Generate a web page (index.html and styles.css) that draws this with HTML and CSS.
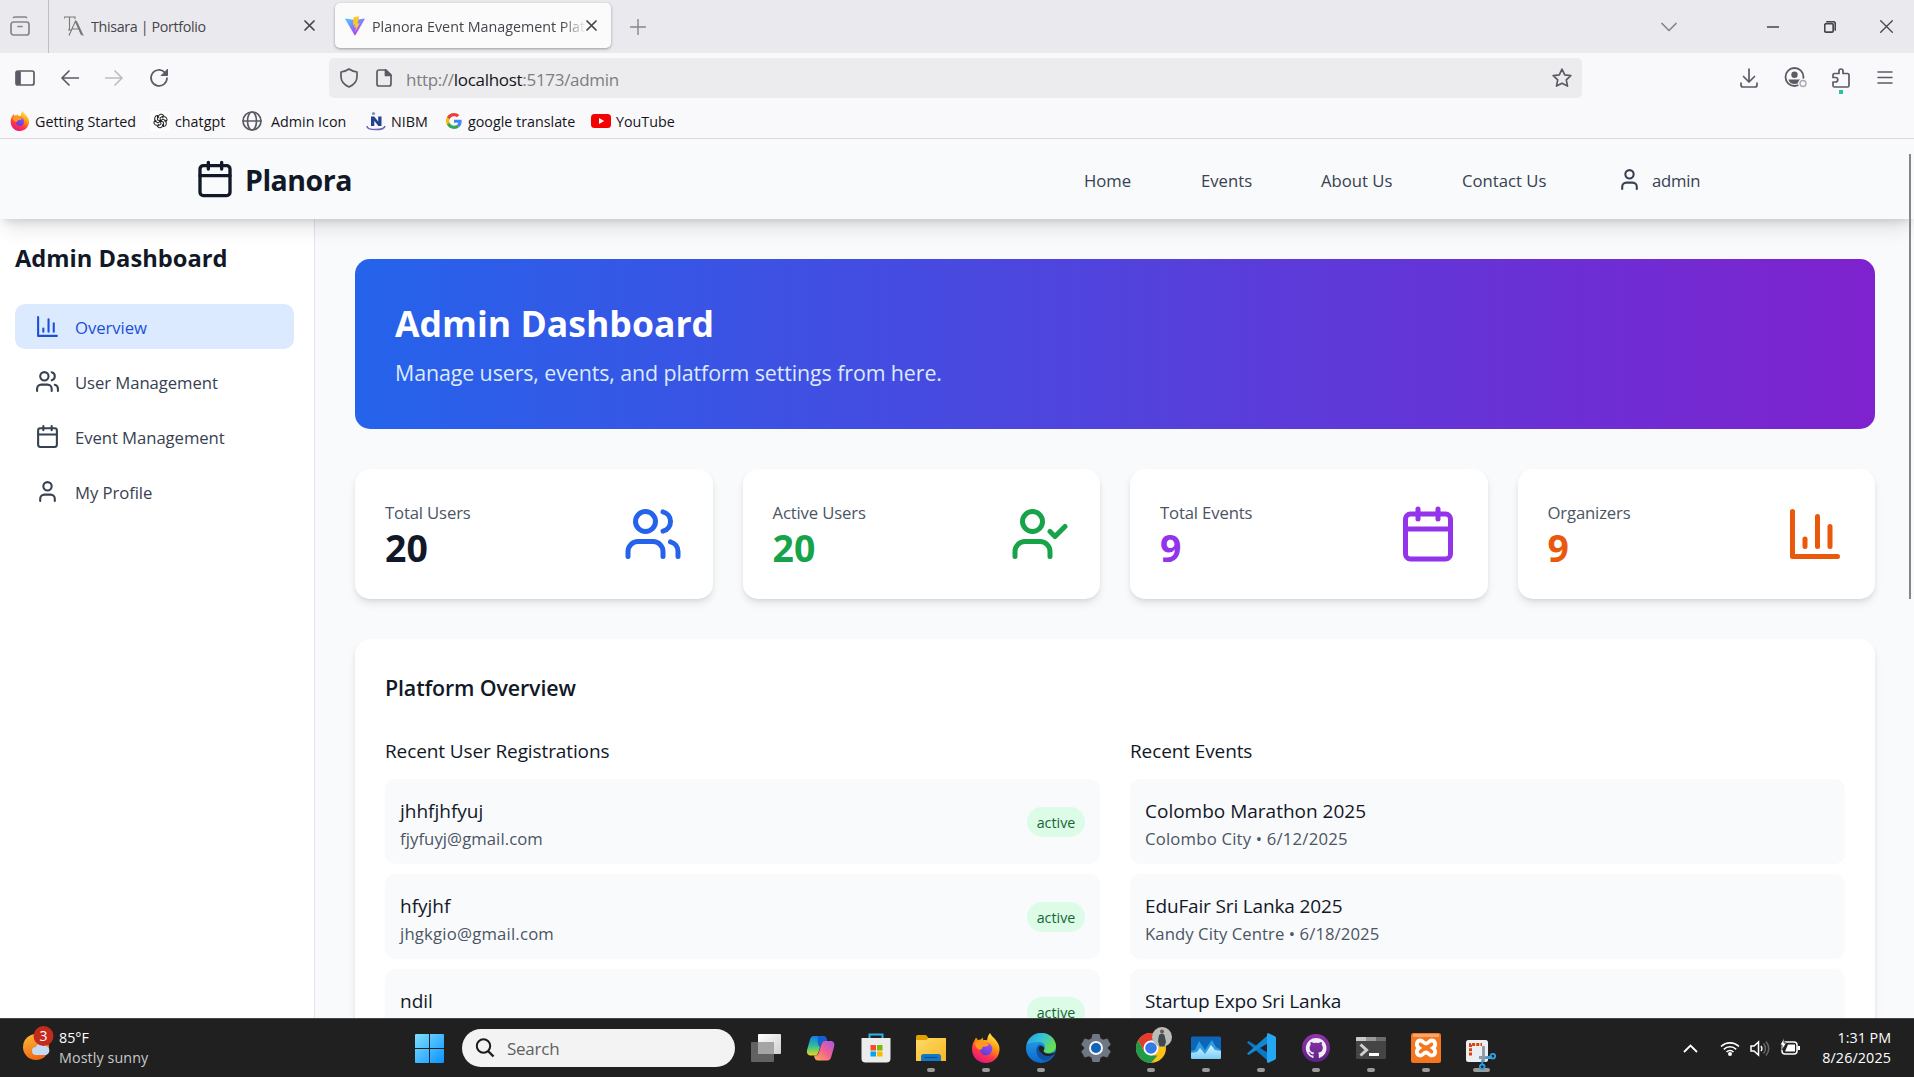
FILE: index.html
```html
<!DOCTYPE html>
<html lang="en">
<head>
<meta charset="utf-8">
<title>Planora Event Management Platform</title>
<link rel="stylesheet" href="styles.css">
</head>
<body>
<svg class="defs" width="0" height="0" aria-hidden="true">
  <defs>
    <symbol id="calendar" viewBox="0 0 24 24"><path d="M8 2v4M16 2v4M3 10h18"/><rect x="3" y="4" width="18" height="18" rx="2"/></symbol>
    <symbol id="user" viewBox="0 0 24 24"><path d="M19 21v-2a4 4 0 0 0-4-4H9a4 4 0 0 0-4 4v2"/><circle cx="12" cy="7" r="4"/></symbol>
    <symbol id="users" viewBox="0 0 24 24"><path d="M16 21v-2a4 4 0 0 0-4-4H6a4 4 0 0 0-4 4v2M22 21v-2a4 4 0 0 0-3-3.87M16 3.13a4 4 0 0 1 0 7.75"/><circle cx="9" cy="7" r="4"/></symbol>
    <symbol id="user-check" viewBox="0 0 24 24"><path d="M16 21v-2a4 4 0 0 0-4-4H6a4 4 0 0 0-4 4v2M16 11l2 2 4-4"/><circle cx="9" cy="7" r="4"/></symbol>
    <symbol id="chart" viewBox="0 0 24 24"><path d="M3 3v18h18M18 17V9M13 17V5M8 17v-3"/></symbol>
    <linearGradient id="ffOuter" x1=".8" y1="0" x2=".3" y2="1"><stop offset="0" stop-color="#fff44f"/><stop offset=".4" stop-color="#ff980e"/><stop offset=".7" stop-color="#ff3647"/><stop offset="1" stop-color="#e31587"/></linearGradient>
    <linearGradient id="ffInner" x1=".8" y1="0" x2=".3" y2="1"><stop offset="0" stop-color="#a84cf0"/><stop offset="1" stop-color="#5a3fd6"/></linearGradient>
    <symbol id="firefox" viewBox="0 0 30 30">
      <path fill="url(#ffOuter)" d="M19 0c1 3 5 5 7.500 9.500 2 3 2.300 6 1.800 9C27.200 25.300 21.600 30 15 30 7.500 30 1 24.500 1 16c0-3.600 1-6.500 2.500-8.500L5 4.500l2 2.700c1-.6 2-.8 3-.6l1.500-2 .8 2.600c1.600-.4 3-.3 3.700.2C16.500 5 17 2 19 0z"/>
      <circle cx="15" cy="16" r="6.300" fill="url(#ffInner)"/>
      <path fill="#ff9a1f" d="M4 11c3-4 7-4 10-2l4 2.500c-1 1.800-3 2-4.500 2-2 0-3 1.500-2.800 3C7 17 5 14.500 4 11z"/>
    </symbol>
    <linearGradient id="vite" x1="0" y1="0" x2=".6" y2="1"><stop offset="0" stop-color="#41d1ff"/><stop offset="1" stop-color="#bd34fe"/></linearGradient>
    <linearGradient id="win" x1="0" y1="0" x2="1" y2="1"><stop offset="0" stop-color="#7fdfff"/><stop offset="1" stop-color="#0a93ff"/></linearGradient>
    <linearGradient id="sun" x1="0" y1="0" x2=".3" y2="1"><stop offset="0" stop-color="#fbbd3a"/><stop offset="1" stop-color="#f26a12"/></linearGradient>
    <linearGradient id="cpA" x1="0" y1="0" x2="0" y2="1"><stop offset="0" stop-color="#1879e8"/><stop offset=".5" stop-color="#2bbf9a"/><stop offset="1" stop-color="#e8d822"/></linearGradient>
    <linearGradient id="cpB" x1="1" y1="0" x2="0" y2="1"><stop offset="0" stop-color="#a556f0"/><stop offset=".5" stop-color="#f2608f"/><stop offset="1" stop-color="#ffb04f"/></linearGradient>
    <linearGradient id="fold" x1="0" y1="0" x2="1" y2="1"><stop offset="0" stop-color="#ffdc68"/><stop offset="1" stop-color="#f9b622"/></linearGradient>
    <linearGradient id="edgeT" x1="0" y1="0" x2="1" y2=".5"><stop offset="0" stop-color="#1f9fe0"/><stop offset=".5" stop-color="#35c1d8"/><stop offset="1" stop-color="#68e04c"/></linearGradient>
    <linearGradient id="edgeB" x1="0" y1="0" x2="0" y2="1"><stop offset="0" stop-color="#2aa7ec"/><stop offset="1" stop-color="#0b68cd"/></linearGradient>
    <linearGradient id="gh" x1="0" y1="0" x2="0" y2="1"><stop offset="0" stop-color="#9335ae"/><stop offset="1" stop-color="#5c2384"/></linearGradient>
    <linearGradient id="perf" x1="0" y1="0" x2="0" y2="1"><stop offset="0" stop-color="#d7f3ff"/><stop offset="1" stop-color="#79cdf8"/></linearGradient>
    <linearGradient id="tv" x1="0" y1="0" x2="1" y2="1"><stop offset="0" stop-color="#fff"/><stop offset="1" stop-color="#cfcfcf"/></linearGradient>
  </defs>
</svg>

<div class="screen">
  <div class="tabbar">
    <div class="recent"><svg width="20" height="20" viewBox="0 0 20 20" class="ln grey"><rect x="1" y="6" width="18" height="13" rx="2.500"/><path d="M3.500 1.500Q4 1 5 1h10q1 0 1.500.5M8 10.500h4"/></svg></div>
    <div class="tab">
      <svg width="20" height="20" viewBox="0 0 20 20" fill="none" stroke="#777" stroke-width="1.100"><path d="M0 3V1h11v2M5.500 1v13M4 14h3M5 19.500L11.500 5l6 13.500 2 .8M8.500 13h6"/><path d="M12 5.500l6 13" stroke-width="2"/></svg>
      <span class="tab-title t-port">Thisara | Portfolio</span>
      <svg class="ln dark" width="11" height="11" viewBox="0 0 11 11"><path d="M1 1l9 9M10 1l-9 9"/></svg>
    </div>
    <div class="tab active">
      <svg width="20" height="20" viewBox="0 0 20 20"><path fill="url(#vite)" d="M.7 2.500L10 4l9.300-1.500q.6.300.3 1L10.500 19q-.5.800-1 0L.4 3.500q-.2-.6.300-1z"/><path fill="#ffc62b" d="M14.300.2L8.500 1.300 8 8.800l2-.4-.7 3.200 1.800-.4-.8 4.600 4.500-8.600-2.200.4z"/></svg>
      <span class="tab-title t-plan">Planora Event Management Plat</span>
      <svg class="ln dark" width="11" height="11" viewBox="0 0 11 11"><path d="M1 1l9 9M10 1l-9 9"/></svg>
    </div>
    <svg class="plus ln grey" width="16" height="16" viewBox="0 0 16 16"><path d="M8 .5v15M.5 8h15" stroke-width="1.400"/></svg>
    <div class="wincontrols">
      <svg class="ln grey" width="16" height="10" viewBox="0 0 16 10"><path d="M1 1.500l7 7 7-7"/></svg>
      <svg class="ln dark" width="12" height="12" viewBox="0 0 12 12"><path d="M0 6h12" stroke-width="1.300"/></svg>
      <svg class="ln dark" width="12" height="12" viewBox="0 0 12 12"><rect x=".7" y="2.700" width="8.500" height="8.500" rx="1.500"/><path d="M3 .7h6a2.300 2.300 0 0 1 2.300 2.300v6"/></svg>
      <svg class="ln dark" width="13" height="13" viewBox="0 0 13 13"><path d="M.7.7l11.600 11.600M12.300.7L.7 12.300" stroke-width="1.300"/></svg>
    </div>
  </div>

  <div class="toolbar">
    <div class="navbtns">
      <svg class="ln tool" width="20" height="16" viewBox="0 0 20 16"><rect x="1" y="1" width="18" height="14" rx="2"/><path d="M2 2h3v12H2z" fill="#5b5b66"/></svg>
      <svg class="ln tool" width="18" height="16" viewBox="0 0 18 16"><path d="M17.500 8H1M8 1L1 8l7 7"/></svg>
      <svg class="ln faint" width="18" height="16" viewBox="0 0 18 16"><path d="M.5 8H17M10 1l7 7-7 7"/></svg>
      <svg class="ln tool" width="20" height="20" viewBox="0 0 20 20"><path d="M18 10a8 8 0 1 1-2.300-5.700"/><path d="M18.500 1.500v6h-6z" fill="#5b5b66" stroke-width="1"/></svg>
    </div>
    <div class="urlbar">
      <svg class="ln tool" width="18" height="20" viewBox="0 0 18 20"><path d="M9 1c2.500 1.800 5 2.600 8 3v4.500C17 13.500 13.500 17 9 19c-4.500-2-8-5.500-8-10.500V4c3-.4 5.500-1.200 8-3z"/></svg>
      <svg class="ln tool" width="16" height="18" viewBox="0 0 16 18"><path d="M3 1h7l5 5v9a2 2 0 0 1-2 2H3a2 2 0 0 1-2-2V3a2 2 0 0 1 2-2z"/><path d="M9.500 1v5.500H15z" fill="#5b5b66"/></svg>
      <span class="url">http://<b>localhost</b>:5173/admin</span>
      <svg class="ln tool star" width="20" height="20" viewBox="0 0 20 20"><path d="M10 1.200l2.700 5.600 6.100.8-4.500 4.200 1.200 6.300L10 15.200l-5.500 2.900 1.200-6.300L1.200 7.600l6.100-.8z"/></svg>
    </div>
    <div class="tools">
      <svg class="ln tool" width="18" height="20" viewBox="0 0 18 20"><path d="M9 1v13M3.500 8.500L9 14l5.500-5.500M1 15v2a2 2 0 0 0 2 2h12a2 2 0 0 0 2-2v-2"/></svg>
      <svg width="24" height="21" viewBox="0 0 24 21"><circle cx="10.500" cy="10" r="9" fill="none" stroke="#5b5b66" stroke-width="1.800"/><circle cx="10.500" cy="7.800" r="3.200" fill="#5b5b66"/><path d="M4.500 12.500h12c-.5 3-3 4.500-6 4.500s-5.500-1.500-6-4.500z" fill="#5b5b66"/><circle cx="19" cy="16.500" r="5" fill="#f9f9fb"/><circle cx="19" cy="16.500" r="3" fill="none" stroke="#aaaab0" stroke-width="1.300"/></svg>
      <div class="ext"><svg class="ln tool" width="18" height="20" viewBox="0 0 18 20"><path d="M7 5.500V3a2 2 0 0 1 4 0v2.500h4.500A1.500 1.500 0 0 1 17 7v10.500a1.500 1.500 0 0 1-1.500 1.500h-13A1.500 1.500 0 0 1 1 17.500V14h2.500a2 2 0 0 0 0-4.500H1V7a1.500 1.500 0 0 1 1.500-1.500z"/></svg><i class="extdot"></i></div>
      <svg class="ln tool" width="16" height="13" viewBox="0 0 16 13"><path d="M1 1h14M1 6.500h14M1 12h14" stroke-width="1.500"/></svg>
    </div>
  </div>

  <div class="bookmarks">
    <svg width="20" height="20"><use href="#firefox"/></svg><span class="b1">Getting Started</span>
    <svg width="20" height="20" viewBox="0 0 20 20"><rect width="20" height="20" rx="3" fill="#fff"/><g fill="none" stroke="#222" stroke-width="1.150" transform="translate(10.500 10) scale(.88)"><path id="petal" d="M-2.500-3.500v-1.300A3.300 3.300 0 0 1 3.600-6L-.5-3.500 0 1.500"/><use href="#petal" transform="rotate(60)"/><use href="#petal" transform="rotate(120)"/><use href="#petal" transform="rotate(180)"/><use href="#petal" transform="rotate(240)"/><use href="#petal" transform="rotate(300)"/></g></svg><span class="b2">chatgpt</span>
    <svg class="ln tool" width="20" height="20" viewBox="0 0 20 20"><circle cx="10" cy="10" r="9"/><ellipse cx="10" cy="10" rx="4.500" ry="9"/><path d="M1 10h18"/></svg><span class="b3">Admin Icon</span>
    <svg width="20" height="20" viewBox="0 0 20 20"><path d="M5 15V5.500h3.200l4 5V5.500H15.500V15h-3.200l-4-5.200V15z" fill="#24438e"/><circle cx="7.500" cy="2.500" r="1.600" fill="#7d92bd"/><path d="M1 15c0 4.800 17 4.800 18 0" fill="none" stroke="#6d63b8" stroke-width="1.500"/></svg><span class="b4">NIBM</span>
    <svg width="16" height="16" viewBox="0 0 48 48"><path fill="#ea4335" d="M24 9.500c3.500 0 6.700 1.200 9.200 3.600l6.900-6.900C35.900 2.400 30.500 0 24 0 14.600 0 6.500 5.400 2.600 13.200l8 6.200C12.400 13.700 17.700 9.500 24 9.500z"/><path fill="#4285f4" d="M47 24.600c0-1.600-.2-3.100-.4-4.600H24v9h12.900c-.6 3-2.200 5.500-4.700 7.200l7.700 6C44.400 38 47 31.800 47 24.600z"/><path fill="#fbbc05" d="M10.500 28.600A14.500 14.500 0 0 1 10.500 19.400l-8-6.200a24 24 0 0 0 0 21.600z"/><path fill="#34a853" d="M24 48c6.500 0 12-2.100 15.900-5.800l-7.700-6c-2.200 1.400-4.900 2.300-8.200 2.300-6.300 0-11.600-4.200-13.500-9.900l-8 6.200C6.500 42.600 14.600 48 24 48z"/></svg><span class="b5">google translate</span>
    <svg width="20" height="14" viewBox="0 0 20 14"><rect width="20" height="14" rx="3.500" fill="#f60002"/><path d="M8 4l5.200 3L8 10z" fill="#fff"/></svg><span class="b6">YouTube</span>
  </div>

  <div class="page">
    <header class="site-header">
      <div class="brand"><svg class="luc" width="40" height="40"><use href="#calendar"/></svg><span>Planora</span></div>
      <nav class="site-nav">
        <a class="n1">Home</a><a class="n2">Events</a><a class="n3">About Us</a><a class="n4">Contact Us</a>
        <a class="n5"><svg class="luc" width="25" height="25"><use href="#user"/></svg><span>admin</span></a>
      </nav>
    </header>

    <div class="body">
      <aside class="sidebar">
        <h2>Admin Dashboard</h2>
        <a class="item current"><svg class="luc" width="25" height="25"><use href="#chart"/></svg><span>Overview</span></a>
        <a class="item"><svg class="luc" width="25" height="25"><use href="#users"/></svg><span>User Management</span></a>
        <a class="item"><svg class="luc" width="25" height="25"><use href="#calendar"/></svg><span>Event Management</span></a>
        <a class="item"><svg class="luc" width="25" height="25"><use href="#user"/></svg><span>My Profile</span></a>
      </aside>

      <main class="main">
        <section class="hero">
          <h1>Admin Dashboard</h1>
          <p>Manage users, events, and platform settings from here.</p>
        </section>

        <section class="stats">
          <div class="card stat"><div><p>Total Users</p><strong>20</strong></div><svg class="luc blue" width="60" height="60"><use href="#users"/></svg></div>
          <div class="card stat green"><div><p>Active Users</p><strong>20</strong></div><svg class="luc" width="60" height="60"><use href="#user-check"/></svg></div>
          <div class="card stat purple"><div><p>Total Events</p><strong>9</strong></div><svg class="luc" width="60" height="60"><use href="#calendar"/></svg></div>
          <div class="card stat orange"><div><p>Organizers</p><strong>9</strong></div><svg class="luc" width="60" height="60"><use href="#chart"/></svg></div>
        </section>

        <section class="card overview">
          <h3>Platform Overview</h3>
          <div class="cols">
            <div class="col">
              <h4>Recent User Registrations</h4>
              <div class="row"><div><p class="name">jhhfjhfyuj</p><p class="sub">fjyfuyj@gmail.com</p></div><span class="badge">active</span></div>
              <div class="row"><div><p class="name">hfyjhf</p><p class="sub wide-sub">jhgkgio@gmail.com</p></div><span class="badge">active</span></div>
              <div class="row"><div><p class="name">ndil</p><p class="sub">&nbsp;</p></div><span class="badge">active</span></div>
            </div>
            <div class="col">
              <h4>Recent Events</h4>
              <div class="row"><div><p class="name">Colombo Marathon 2025</p><p class="sub wide-sub">Colombo City • 6/12/2025</p></div></div>
              <div class="row"><div><p class="name tight">EduFair Sri Lanka 2025</p><p class="sub">Kandy City Centre • 6/18/2025</p></div></div>
              <div class="row"><div><p class="name tight">Startup Expo Sri Lanka</p><p class="sub">&nbsp;</p></div></div>
            </div>
          </div>
        </section>
      </main>
    </div>
    <i class="scroll-thumb"></i>
  </div>

  <footer class="taskbar">
    <div class="weather">
      <svg width="36" height="36" viewBox="0 0 36 36"><circle cx="14" cy="21" r="13" fill="url(#sun)"/><path d="M14 29a4 4 0 0 1 0-8 5.500 5.500 0 0 1 10-1 4.700 4.700 0 0 1 0 9z" fill="#c5daf7"/><circle cx="21.500" cy="10" r="10" fill="#c42b1c"/><text x="21.500" y="15" text-anchor="middle" font-size="14" fill="#fff">3</text></svg>
      <div class="wtext"><span>85°F</span><span class="w2">Mostly sunny</span></div>
    </div>
    <svg width="29" height="29" viewBox="0 0 29 29"><path fill="url(#win)" d="M1 0h13v14H0V1a1 1 0 0 1 1-1zM15 0h13a1 1 0 0 1 1 1v13H15zM0 15h14v14H1a1 1 0 0 1-1-1zM15 15h14v13a1 1 0 0 1-1 1H15z"/></svg>
    <div class="search"><svg width="20" height="20" viewBox="0 0 20 20" fill="none" stroke="#1c1c1c" stroke-width="2"><circle cx="8.500" cy="8" r="6.700"/><path d="M13 13l5.500 5.500" stroke-width="2.400"/></svg><span>Search</span></div>
    <div class="apps">
      <div class="app"><svg viewBox="0 0 30 30"><rect x="7" y="1" width="23" height="20" rx="1" fill="url(#tv)"/><rect y="9" width="23" height="20" rx="1" fill="#6f6f6f" opacity=".85"/><path d="M7 9h16v12H7z" fill="#a5a5a5"/></svg></div>
      <div class="app"><svg viewBox="0 0 30 30"><path fill="url(#cpA)" d="M7.500 3h9.500c2 0 3 1 3.500 3l.5 2h-2.500c-2 0-2.800 1-3.300 2.500L12.500 19c-.7 2-1.500 3.500-3.500 3.500H5C1.500 22.500.3 20 1.200 16.500L4 6.500C4.700 4.200 5.500 3 7.500 3z"/><path fill="#1260d8" d="M12 3h5c2 0 3 1 3.500 3l.5 2h-2.500c-2 0-2.800 1-3.300 2.500L14 14C12 13 11 8 12 3z"/><path fill="url(#cpB)" d="M21.500 27.500H12c-2 0-3-1-3.500-3L8 22.500h1.500c2 0 2.800-1 3.300-3L15.500 11c.7-2 1.500-3 3.500-3h5.500c3.500 0 4.500 2.500 3.500 6l-2.800 10c-.7 2.300-1.700 3.500-3.700 3.500z"/></svg></div>
      <div class="app"><svg viewBox="0 0 30 30"><path d="M8.500 6V1.500h13V6" fill="none" stroke="#2db4f0" stroke-width="2"/><path d="M.5 5h29v20.500a4 4 0 0 1-4 4h-21a4 4 0 0 1-4-4z" fill="#ececec"/><path d="M9.500 12H15v5.500H9.500z" fill="#f25022"/><path d="M16 12h5.500v5.500H16z" fill="#7fba00"/><path d="M9.500 18.500H15v5H9.500z" fill="#00a4ef"/><path d="M16 18.500h5.500v5H16z" fill="#ffb900"/></svg></div>
      <div class="app run"><svg viewBox="0 0 30 30"><path d="M0 3.500A1.500 1.500 0 0 1 1.500 2H10l3 3.500V10H0z" fill="#e0a000"/><path d="M0 7h10l3-2h17v23H0z" fill="url(#fold)"/><path d="M5 28v-4.500A2.500 2.500 0 0 1 7.500 21h15a2.500 2.500 0 0 1 2.500 2.500V28z" fill="#1279c9"/><path d="M8.500 24.500h13" stroke="#074d8c" stroke-width="1.200"/></svg></div>
      <div class="app run"><svg><use href="#firefox"/></svg></div>
      <div class="app run"><svg viewBox="0 0 30 30"><circle cx="15" cy="15" r="15" fill="url(#edgeB)"/><path fill="url(#edgeT)" d="M1 11C3 4 9 0 15.500 0 24 0 30 6.500 30 13c0 5-4 7-8 7-3.500 0-5-1.200-4-2.700 2-3 1-8-4.500-8.300C8 8.500 3 10 1 11z"/><path fill="#124f9c" d="M13 12c-2 1.500-3 4-2.500 7 .7 4.500 4.500 8.500 9.500 8.800 3-1 6-3.300 7.500-6.300-3 1.500-8 1.500-10.500-1-1-1-1-2 0-3 1.500-2-1-6.500-4-5.500z"/><path fill="#222" d="M13.200 14c2-2.200 5.300-.5 5 2-.4 1.500-1.700 2.200 1 4 3 1.400 7 1.200 10-1.200-.6 2-1.200 2.700-1.700 3.200-4 1.800-8.500 1.300-11-1-2-1.800-4.600-4-3.300-7z"/></svg></div>
      <div class="app"><svg viewBox="0 0 30 30"><path fill="#6f7882" d="M11.500 1h7l1 4.200 2.600 1.500L26.300 5.500l3.500 6-3 3v1l3 3-3.500 6-4.200-1.200-2.600 1.500-1 4.200h-7l-1-4.200-2.600-1.500L3.700 24.500.2 18.500l3-3v-1l-3-3 3.500-6 4.200 1.200 2.600-1.500z"/><circle cx="15" cy="15" r="7" fill="#f1f4f6"/><circle cx="15" cy="15" r="5" fill="#0e63b5"/></svg></div>
      <div class="app run"><svg viewBox="0 0 30 30"><circle cx="15" cy="15" r="15" fill="#fbc116"/><path fill="#e33b2e" d="M2 7.500a15 15 0 0 1 26 0H15v7.500L8.500 18.800z"/><path fill="#229a4a" d="M2 7.500L8.500 18.800 15 22.500h6.500L15 30A15 15 0 0 1 2 7.500z"/><circle cx="15" cy="15" r="7.500" fill="#fff"/><circle cx="15" cy="15" r="5.800" fill="#3479e8"/></svg><svg class="avatar" viewBox="0 0 20 20"><circle cx="10" cy="10" r="10" fill="#b9bfb8"/><path d="M7 8q3-3 5.500 0l1.500 7-1.500 4.500h-5L6 14z" fill="#3e4a50"/><circle cx="10" cy="4.500" r="2" fill="#6d5648"/></svg></div>
      <div class="app run"><svg viewBox="0 0 30 30"><path d="M0 5a1.500 1.500 0 0 1 1.500-1.500h27A1.500 1.500 0 0 1 30 5v20H0z" fill="#0d65b5"/><path d="M0 18l4-1 4-9 6 9 4-6 3-4 4 7 5 3v8H0z" fill="#2d9be3"/><path d="M0 20l6-1 3-4 5 6 6-9 4 5 6 1v7a1 1 0 0 1-1 1H1a1 1 0 0 1-1-1z" fill="url(#perf)"/></svg></div>
      <div class="app run"><svg viewBox="0 0 30 30"><path d="M2.500 8L1 9.500 22 28l2-7z" fill="#0a78c2"/><path d="M1 20.500L2.500 22 24 9l-2-7z" fill="#1287d3"/><path d="M22 0l6.500 3A2.500 2.500 0 0 1 30 5v20a2.500 2.500 0 0 1-1.500 2L22 30l-1-1V1z" fill="#25a7f2"/></svg></div>
      <div class="app run"><svg viewBox="0 0 30 30"><circle cx="15" cy="15" r="14" fill="url(#gh)"/><path fill="#f2eef5" d="M15 5A10.200 10.200 0 0 0 11.800 24.900c.5.100.7-.2.700-.5v-2c-2.800.6-3.400-1.200-3.400-1.200-.5-1.200-1.100-1.500-1.100-1.500-1-.6 0-.6 0-.6 1 .1 1.600 1 1.600 1 .9 1.600 2.400 1.100 3 .9.100-.7.400-1.100.7-1.400-2.300-.3-4.700-1.100-4.700-5.100 0-1.100.4-2 1.100-2.700-.1-.3-.5-1.300.1-2.700 0 0 .9-.3 2.800 1a9.700 9.700 0 0 1 5.200 0c1.900-1.300 2.800-1 2.800-1 .6 1.400.2 2.400.1 2.700.7.700 1.100 1.600 1.100 2.700 0 4-2.400 4.800-4.700 5.100.4.300.7.900.7 1.900v2.900c0 .3.200.6.700.5A10.200 10.200 0 0 0 15 5z"/></svg></div>
      <div class="app run"><svg viewBox="0 0 30 30"><path d="M1 4h28a1 1 0 0 1 1 1v20a1 1 0 0 1-1 1H1a1 1 0 0 1-1-1V5a1 1 0 0 1 1-1z" fill="#454545"/><path d="M0 8V5a1 1 0 0 1 1-1h9v4z" fill="#c9c9c9"/><path d="M10 4h10v4H10z" fill="#989898"/><path d="M20 4h9a1 1 0 0 1 1 1v3H20z" fill="#6c6c6c"/><path d="M4.500 11.500l6 5.500-6 5.500" fill="none" stroke="#d0d0d0" stroke-width="3"/><path d="M13 21.500h10" stroke="#fff" stroke-width="3"/></svg></div>
      <div class="app run"><svg viewBox="0 0 30 30"><rect width="30" height="30" rx="2.500" fill="#f47720"/><path d="M2 1h26v3H2z" fill="#f9a56a"/><path d="M9.500 7.500c-4 0-5 5-1.500 7.500-3.500 2.500-2.500 7.500 1.500 7.500 2.500 0 3-3 5.500-3s3 3 5.500 3c4 0 5-5 1.500-7.500 3.500-2.500 2.500-7.500-1.500-7.500-2.500 0-3 3-5.500 3s-3-3-5.500-3z" fill="none" stroke="#fff" stroke-width="3.800"/></svg></div>
      <div class="app run wide"><svg viewBox="0 0 30 30"><rect y="7" width="22" height="22" rx="2.500" fill="#eceff1"/><path d="M4.500 22.500v-11H16" fill="none" stroke="#d8400f" stroke-width="3" stroke-dasharray="3 1.200"/><path d="M17.500 13v16M13 24.500h13" stroke="#8e99a3" stroke-width="2.800"/></svg><svg class="scissors" viewBox="0 0 16 16" fill="none" stroke="#2b9fe0" stroke-width="1.800"><circle cx="3" cy="13" r="2.200"/><circle cx="13" cy="3" r="2.200"/><path d="M3 10V6M10.500 3.500L6 5"/></svg></div>
    </div>
    <div class="tray">
      <svg width="15" height="9" viewBox="0 0 15 9" fill="none" stroke="#fff" stroke-width="1.800"><path d="M1 8l6.500-6.500L14 8"/></svg>
      <svg width="20" height="15" viewBox="0 0 20 15" fill="none" stroke="#fff" stroke-width="1.600"><path d="M1 5.500a13 13 0 0 1 18 0M3.800 8.300a9 9 0 0 1 12.400 0M6.500 11a5 5 0 0 1 7 0"/><circle cx="10" cy="13" r="1.200" fill="#fff"/></svg>
      <svg width="20" height="17" viewBox="0 0 20 17" fill="none" stroke="#fff" stroke-width="1.500"><path d="M1 6h3l4.500-4v13L4 11H1zM11 6q1.800 2.500 0 5"/><path d="M13.500 3.500q4 5 0 10M16 1.500q5.500 7 0 14" stroke="#666"/></svg>
      <svg class="battery" width="20" height="17" viewBox="0 0 20 17"><rect x="2" y="4" width="15" height="12" rx="3" fill="none" stroke="#fff" stroke-width="1.500"/><path d="M5 13.500L8 6.500h7v7zM17.500 8H20v4h-2.500z" fill="#fff"/><path d="M4 0v5H6.500L2 12V7H0z" fill="#fff" stroke="#202020" stroke-width=".8"/></svg>
      <div class="clock"><span>1:31 PM</span><span class="k2">8/26/2025</span></div>
    </div>
  </footer>
</div>
</body>
</html>
```
FILE: styles.css
```css
* { box-sizing: border-box; margin: 0; padding: 0; }
body { width: 1914px; height: 1077px; overflow: hidden; font-family: "Open Sans", "Noto Sans", sans-serif; color: #111827; white-space: nowrap; }
svg { flex: none; display: block; }
.defs { position: absolute; }
.screen { width: 1914px; height: 1077px; display: grid; grid-template-rows: 53px 47px 39px 879px 59px; }
.ln { fill: none; stroke-width: 1.7; stroke-linecap: round; stroke-linejoin: round; }
.grey { stroke: #85858c; }
.dark { stroke: #45454b; }
.tool { stroke: #5b5b66; }
.faint { stroke: #bcbcc2; }
.luc { fill: none; stroke: currentColor; stroke-width: 2; stroke-linecap: round; stroke-linejoin: round; }

/* Tab strip */
.tabbar { background: #eaeaee; display: flex; align-items: flex-start; }
.recent { width: 49px; height: 53px; padding: 16px 0 0 10px; border-right: 1px solid #bebec4; }
.tab { width: 276px; height: 45px; margin: 3px 0 0 5px; padding: 0 14px 0 10px; display: flex; align-items: center; }
.tab:not(.active) { padding-right: 15px; }
.tab.active { background: #fbfbfc; border-radius: 5px; box-shadow: 0 1px 3px rgba(0,0,0,.35); }
.tab-title { flex: 1; margin-left: 7px; font-size: 14.3px; color: #45454b; line-height: 20px; overflow: hidden; padding-top: 2px; }
.t-port { letter-spacing: -.35px; }
.t-plan { -webkit-mask-image: linear-gradient(90deg, #000 190px, transparent 214px); mask-image: linear-gradient(90deg, #000 190px, transparent 214px); }
.plus { margin: 19px 0 0 19px; }
.wincontrols { margin-left: auto; height: 53px; width: 253px; display: grid; grid-template-columns: 106px 57px 56px 34px; align-items: center; }

/* Navigation toolbar */
.toolbar { background: #f9f9fb; display: flex; align-items: center; }
.navbtns { width: 329px; padding: 2px 0 0 15px; display: flex; align-items: center; gap: 26px; }
.urlbar { width: 1253px; height: 40px; background: #ececee; border-radius: 5px; display: flex; align-items: center; padding: 0 10px 0 11px; margin-top: 3px; }
.urlbar svg + svg { margin-left: 18px; }
.url { margin-left: 14px; padding-top: 2px; font-size: 17px; letter-spacing: -.3px; color: #7d7d82; }
.url b { font-weight: 400; color: #15141a; }
.urlbar .star { margin-left: auto; }
.tools { margin-left: auto; padding: 2px 21px 0 0; display: flex; align-items: center; gap: 26px; }
.ext { position: relative; margin-left: -2px; margin-right: 1px; }
.extdot { position: absolute; left: 7px; top: 22px; width: 4px; height: 4px; background: #2ac3a2; }

/* Bookmarks */
.bookmarks { background: #f9f9fb; border-bottom: 1px solid #dadade; display: flex; align-items: center; padding: 4px 0 0 10px; font-size: 14.3px; color: #15141a; }
.bookmarks span { margin-left: 5px; }
.b1 { width: 115px; }
.b2 { width: 67px; }
.b3 { width: 95px; }
.bookmarks .b3 { margin-left: 9px; }
.b4 { width: 55px; }
.bookmarks .b5 { width: 123px; margin-left: 6px; }

/* Site */
.page { position: relative; overflow: hidden; background: #f9fafc; }
.site-header { position: relative; z-index: 2; height: 80px; background: #f9fafc; box-shadow: 0 12px 19px -4px rgba(0,0,0,.12), 0 5px 8px -4px rgba(0,0,0,.14); display: flex; justify-content: space-between; align-items: center; padding: 0 214px 0 195px; }
.brand { display: flex; align-items: center; gap: 10px; font-size: 28.5px; font-weight: 700; letter-spacing: -.5px; }
.brand span { padding-top: 2px; }
.site-nav { display: flex; align-items: center; gap: 70px; font-size: 16.7px; color: #374151; }
.site-nav a { display: flex; align-items: center; gap: 10px; padding-top: 3px; }
.site-nav .n5 { width: 83px; padding-top: 0; letter-spacing: -.25px; }
.n5 span { padding-top: 3px; }
.n1 { width: 47px; }
.n2 { width: 50px; }
.n3 { width: 71px; }
.n4 { width: 85px; }
.body { display: flex; height: 799px; }
.sidebar { width: 315px; background: #fff; border-right: 1px solid #e2e4e8; padding: 19px 20px 0 15px; }
.sidebar h2 { font-size: 23.7px; line-height: 40px; margin-bottom: 26px; font-weight: 700; }
.item { height: 45px; margin-bottom: 10px; padding-left: 20px; border-radius: 10px; display: flex; align-items: center; gap: 15px; font-size: 16.7px; letter-spacing: -.07px; color: #374151; }
.item span { padding-top: 2px; }
.current { background: #dbeafe; color: #1d4ed8; }
.main { flex: 1; padding: 40px 39px 0 40px; display: flex; flex-direction: column; gap: 40px; }
.hero { height: 170px; flex: none; border-radius: 15px; background: linear-gradient(90deg, #2563eb, #7e22ce); color: #fff; padding: 42px 40px; }
.hero h1 { font-size: 35.6px; line-height: 45px; }
.hero p { font-size: 21.4px; line-height: 35px; margin-top: 9px; letter-spacing: -.1px; color: #dbeafe; }
.stats { display: grid; grid-template-columns: repeat(4, 1fr); gap: 30px; flex: none; }
.card { background: #fff; border-radius: 15px; box-shadow: 0 5px 8px -1px rgba(0,0,0,.1), 0 2px 5px -2px rgba(0,0,0,.1); }
.stat { height: 130px; padding: 0 30px; display: flex; align-items: center; justify-content: space-between; }
.stat p { font-size: 16.7px; line-height: 25px; letter-spacing: -.15px; color: #4b5563; margin-top: 1px; }
.stat strong { display: block; font-size: 37.4px; line-height: 45px; }
.blue { color: #2563eb; }
.green { color: #16a34a; }
.purple { color: #9333ea; }
.orange { color: #ea580c; }
.overview { height: 600px; flex: none; padding: 31px 30px; }
.overview h3 { font-size: 21.4px; line-height: 35px; font-weight: 600; letter-spacing: -.13px; }
.cols { display: grid; grid-template-columns: 1fr 1fr; gap: 30px; margin-top: 31px; }
.col { display: flex; flex-direction: column; gap: 10px; }
.col h4 { font-size: 19px; line-height: 30px; font-weight: 400; letter-spacing: -.11px; margin-bottom: 3px; }
.row { height: 85px; border-radius: 10px; background: #f9fafc; padding: 3px 15px 0; display: flex; align-items: center; justify-content: space-between; }
.name { font-size: 19px; line-height: 30px; }
.tight { letter-spacing: -.15px; }
.sub { font-size: 16.7px; line-height: 25px; letter-spacing: .07px; color: #4b5563; }
.wide-sub { letter-spacing: .2px; }
.badge { width: 58px; height: 30px; border-radius: 15px; background: #dcfce7; color: #166534; font-size: 14.3px; line-height: 31px; text-align: center; margin-top: -3px; }
.scroll-thumb { position: absolute; z-index: 3; left: 1909px; top: 15px; width: 2px; height: 445px; background: #85858a; }

/* Taskbar */
.taskbar { background: #202020; border-top: 1px solid #454545; display: flex; align-items: center; color: #fff; font-size: 14.3px; }
.weather { width: 415px; padding-left: 22px; display: flex; align-items: center; gap: 1px; }
.weather svg { margin-top: -8px; }
.wtext, .clock { display: flex; flex-direction: column; line-height: 20px; }
.w2 { color: #c8c8c8; letter-spacing: .1px; }
.search { width: 273px; height: 38px; margin-left: 18px; border-radius: 19px; background: #f3f3f3; display: flex; align-items: center; padding-left: 13px; gap: 12px; font-size: 17px; letter-spacing: -.25px; color: #5f5f5f; }
.apps { display: flex; margin-left: 4px; }
.app { position: relative; width: 55px; height: 58px; padding: 14px 0 0 12px; }
.app > svg { width: 30px; height: 30px; }
.run::after { content: ""; position: absolute; left: 23px; top: 49px; width: 8px; height: 4px; border-radius: 2px; background: #9a9a9a; }
.wide::after { left: 19px; width: 17px; }
.app > .avatar { position: absolute; left: 28px; top: 8px; width: 20px; height: 20px; }
.app > .scissors { position: absolute; left: 25px; top: 34px; width: 17px; height: 17px; z-index: 1; }
.tray { margin-left: auto; padding-right: 23px; display: flex; align-items: center; }
.tray svg:nth-child(1) { margin-right: 22px; }
.tray svg:nth-child(2), .tray svg:nth-child(3) { margin-right: 10px; }
.tray .battery { margin-top: -3px; }
.clock { width: 91px; align-items: flex-end; }
.k2 { letter-spacing: .12px; }
```
